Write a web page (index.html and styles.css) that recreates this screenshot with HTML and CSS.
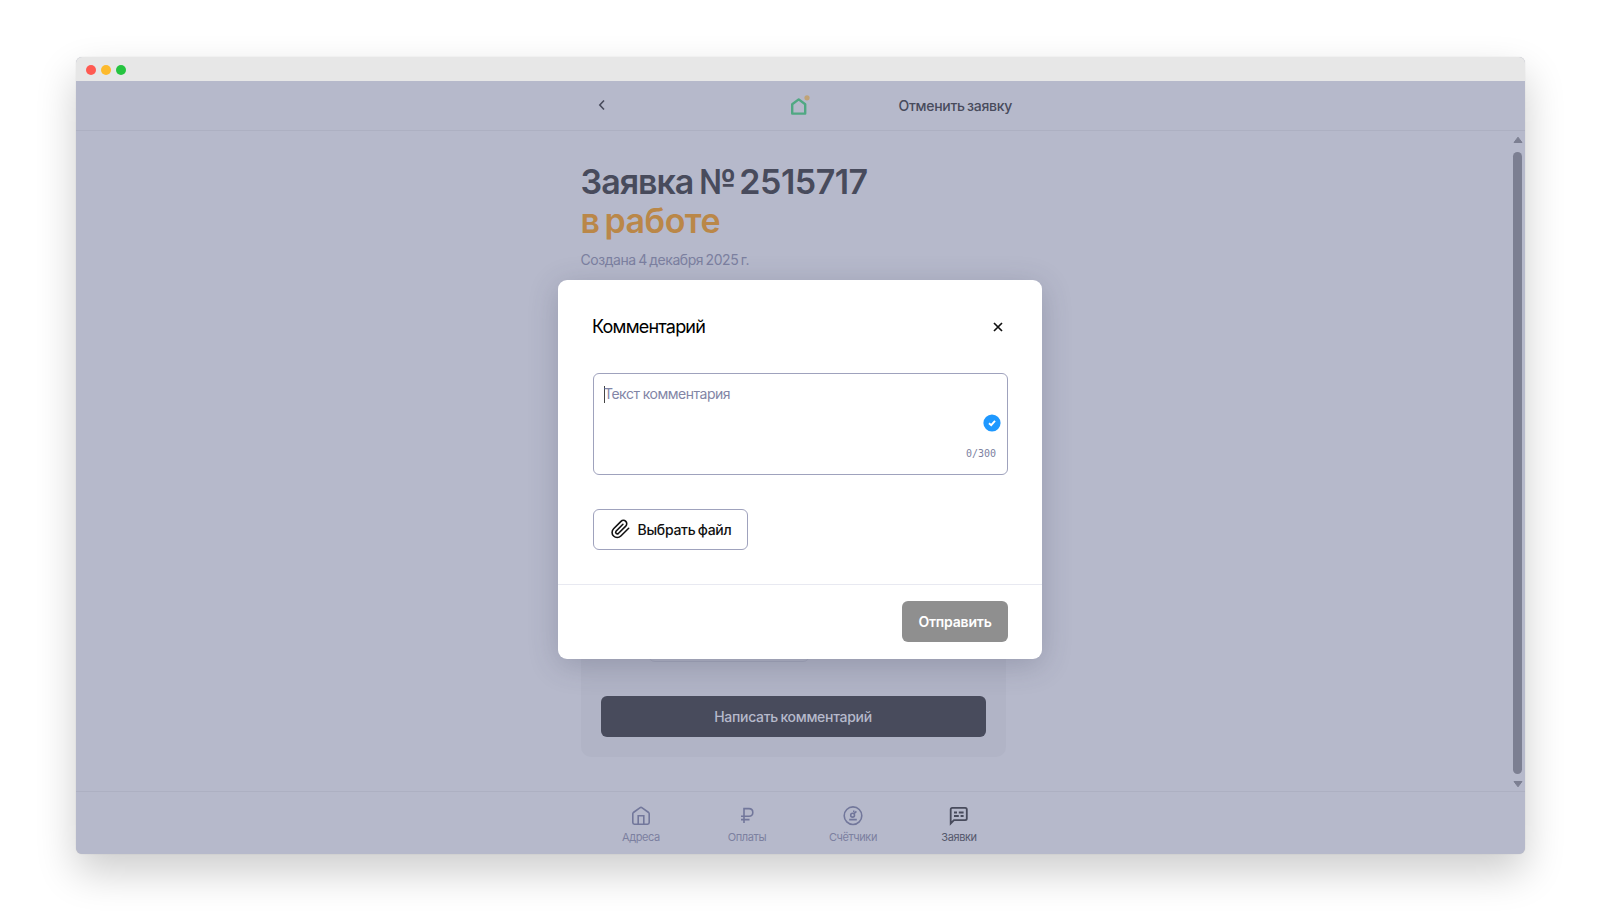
FILE: index.html
```
<!DOCTYPE html>
<html lang="ru">
<head>
    <meta charset="UTF-8">
    <meta name="viewport" content="width=device-width, initial-scale=1.0">
    <title>Заявка №2515717</title>
    <link rel="stylesheet" href="styles.css">
</head>
<body>

    <div class="window">
        <div class="titlebar">
            <span class="dot red"></span>
            <span class="dot yellow"></span>
            <span class="dot green"></span>
        </div>

        <header class="header">
            <div class="header-inner">
                <svg class="back" width="8" height="12" viewBox="0 0 8 12"><path d="M6 1.5 1.8 6 6 10.5"/></svg>
                <svg class="logo" width="20" height="22" viewBox="0 0 20 22">
                    <path d="M2.2 9.3 8.7 4.4 15.2 9.3V18.6H2.2Z"/>
                    <circle cx="17" cy="2.8" r="2.6"/>
                </svg>
                <a class="cancel">Отменить заявку</a>
            </div>
        </header>

        <main class="main">
            <div class="content">
                <h1><span class="name">Заявка</span> <span class="sign">№</span><span class="number">2515717</span><br><span class="status">в работе</span></h1>
                <p class="created">Создана 4 декабря 2025 г.</p>
                <section class="card">
                    <div class="message"></div>
                    <button class="write">Написать комментарий</button>
                </section>
            </div>
            <div class="scrollbar">
                <svg width="10" height="8" viewBox="0 0 10 8"><path d="M5 1.2 9 6.5H1Z"/></svg>
                <div class="thumb"></div>
                <svg width="10" height="8" viewBox="0 0 10 8"><path d="M5 6.8 9 1.5H1Z"/></svg>
            </div>
        </main>

        <nav class="nav">
            <a class="nav-item">
                <svg width="20" height="20" viewBox="0 0 20 20"><path d="M1.8 7.8Q1.8 7 2.4 6.5L8.8 1.8Q10 1 11.2 1.8L17.6 6.5Q18.2 7 18.2 7.8V16.6Q18.2 18.2 16.6 18.2H3.4Q1.8 18.2 1.8 16.6ZM7.2 18V9.8H12.8V18"/></svg>
                <span>Адреса</span>
            </a>
            <a class="nav-item">
                <svg width="20" height="20" viewBox="0 0 20 20"><path d="M7 17V2.6H12Q15.8 2.6 15.8 6.4T12 10.2H4M4 13.6H12.5"/></svg>
                <span>Оплаты</span>
            </a>
            <a class="nav-item">
                <svg width="20" height="20" viewBox="0 0 20 20"><circle cx="10" cy="9.7" r="8.8"/><circle cx="9.6" cy="9.2" r="1.9"/><path d="M11 7.8 13.4 5.4M6.2 13.6H13.8M10 5.4H11.5"/></svg>
                <span>Счётчики</span>
            </a>
            <a class="nav-item active">
                <svg width="20" height="20" viewBox="0 0 20 20"><path d="M1.7 17.5V3.4Q1.7 1.8 3.3 1.8H16.2Q17.8 1.8 17.8 3.4V12.6Q17.8 14.2 16.2 14.2H5ZM5 6.5H8M9.8 6.5H14.6M5 10H9.8M11.6 10H14.6"/></svg>
                <span>Заявки</span>
            </a>
        </nav>

        <div class="modal">
            <div class="modal-body">
                <div class="modal-head">
                    <h2>Комментарий</h2>
                    <svg class="close" width="10" height="10" viewBox="0 0 10 10"><path d="M1 1 9 9M9 1 1 9"/></svg>
                </div>
                <div class="field">
                    <i class="caret"></i>
                    <span class="placeholder">Текст комментария</span>
                    <svg class="check" width="18" height="18" viewBox="0 0 18 18"><circle cx="9" cy="9" r="8.6"/><path d="M6 9.2 8.2 11.2 12 6.8"/></svg>
                    <span class="counter">0/300</span>
                </div>
                <button class="file">
                    <svg width="20" height="20" viewBox="0 0 24 24"><path d="M22.4 11.1 13 20.4A6.1 6.1 0 0 1 4.3 11.7L13.2 2.8A4 4 0 0 1 18.9 8.5L10 17.4A2 2 0 0 1 7.2 14.6L15.5 6.3"/></svg>
                    <span>Выбрать файл</span>
                </button>
            </div>
            <div class="modal-foot">
                <button class="send">Отправить</button>
            </div>
        </div>
    </div>

</body>
</html>
```
FILE: styles.css
```
* {
    box-sizing: border-box;
}
body {
    margin: 0;
    height: 911px;
    padding: 57px 75.5px 0;
    background: #fff;
    font-family: Inter, "Liberation Sans", sans-serif;
    overflow: hidden;
}
h1, h2, p {
    margin: 0;
}
button {
    font-family: inherit;
    border: none;
    padding: 0;
    display: flex;
    align-items: center;
    justify-content: center;
}
svg {
    display: block;
    fill: none;
    flex: none;
}
span {
    white-space: nowrap;
}
.window {
    position: relative;
    height: 797px;
    display: flex;
    flex-direction: column;
    background: #b6b9cb;
    border-radius: 6px;
    box-shadow: 0 0 1px rgba(0, 0, 0, 0.2), 0 18px 40px rgba(0, 0, 0, 0.2);
}
.titlebar {
    height: 24px;
    padding: 1px 0 0 10px;
    display: flex;
    align-items: center;
    gap: 5px;
    background: #e7e7e7;
    border-radius: 6px 6px 0 0;
}
.dot {
    width: 10px;
    height: 10px;
    border-radius: 50%;
}
.red {
    background: #ff5a52;
}
.yellow {
    background: #fdba2d;
}
.green {
    background: #25c440;
}
.header {
    height: 50px;
    border-bottom: 1px solid #adb0c2;
    display: flex;
    justify-content: center;
}
.header-inner {
    width: 424px;
    display: grid;
    grid-template-columns: 1fr 20px 1fr;
    align-items: center;
}
.back {
    margin: -1px 0 0 10px;
    stroke: #484b5c;
    stroke-width: 1.6;
}
.logo path {
    stroke: #50a883;
    stroke-width: 2.4;
    stroke-linejoin: round;
}
.logo circle {
    fill: #c0a377;
}
.cancel {
    justify-self: end;
    margin-top: -1px;
    font-size: 14px;
    font-weight: 500;
    letter-spacing: -0.3px;
    word-spacing: -1px;
    color: #484b5c;
}
.main {
    height: 660px;
    display: flex;
}
.content {
    flex: 1;
    display: flex;
    flex-direction: column;
    align-items: center;
    padding-top: 31px;
}
h1, .created, .card {
    width: 425px;
}
h1 {
    font-size: 34px;
    line-height: 39px;
    font-weight: 600;
    word-spacing: -3px;
    color: #484b5c;
}
.name {
    letter-spacing: -1px;
}
.sign {
    letter-spacing: 3px;
}
.number {
    letter-spacing: -0.5px;
}
.status {
    letter-spacing: -0.5px;
    color: #ba8748;
}
.created {
    margin-top: 10px;
    font-size: 14px;
    line-height: 20px;
    letter-spacing: -0.45px;
    word-spacing: -1px;
    color: #7c80a0;
}
.card {
    height: 417px;
    margin-top: 70px;
    padding: 20px;
    background: #b1b4c6;
    border-radius: 10px;
    display: flex;
    flex-direction: column;
    justify-content: flex-end;
}
.message {
    width: 162px;
    height: 60px;
    margin: 0 0 34px 47px;
    border: 1px solid #a4a7bb;
    border-radius: 7px;
}
.write {
    height: 41px;
    background: #484b5c;
    color: #b6b9cb;
    border-radius: 6px;
    font-size: 14px;
    font-weight: 500;
    letter-spacing: -0.3px;
    word-spacing: -1px;
}
.scrollbar {
    width: 14px;
    padding: 5px 0 3px;
    display: flex;
    flex-direction: column;
    align-items: center;
    gap: 7px;
}
.scrollbar path {
    fill: #7c7f92;
    stroke: #7c7f92;
    stroke-linejoin: round;
}
.thumb {
    flex: 1;
    width: 9px;
    margin: 1px 0 -1px;
    border-radius: 5px;
    background: #7c7f92;
}
.nav {
    height: 63px;
    padding-top: 14px;
    border-top: 1px solid #adb0c2;
    display: flex;
    justify-content: center;
}
.nav-item {
    width: 106px;
    display: flex;
    flex-direction: column;
    align-items: center;
    gap: 4px;
    font-size: 11px;
    line-height: 14px;
    letter-spacing: -0.4px;
    color: #7c80a0;
}
.nav-item svg {
    stroke: #72779b;
    stroke-width: 1.6;
}
.nav-item.active {
    color: #55586c;
}
.nav-item.active svg {
    stroke: #484b5c;
    stroke-width: 1.8;
}

/* modal */
.modal {
    position: absolute;
    left: 482.5px;
    top: 223px;
    width: 484px;
    height: 379px;
    background: #fff;
    border-radius: 9px;
    box-shadow: 0 6px 30px rgba(50, 54, 80, 0.24);
    display: flex;
    flex-direction: column;
}
.modal-body {
    flex: 1;
    padding: 34px 34px 0 35px;
}
.modal-head {
    display: flex;
    align-items: center;
    justify-content: space-between;
    height: 25px;
    padding-right: 5px;
}
h2 {
    margin-left: -1px;
    font-size: 18px;
    line-height: 25px;
    font-weight: 400;
    letter-spacing: -0.8px;
    color: #000;
}
.close {
    stroke: #111;
    stroke-width: 1.7;
}
.field {
    height: 102px;
    margin-top: 34px;
    padding: 9px 11px 0 10px;
    border: 1px solid #9fa2bd;
    border-radius: 6px;
    display: grid;
    grid-template-columns: 1px 1fr;
    grid-template-rows: 31px 29px 22px;
}
.caret {
    width: 1px;
    height: 17px;
    margin-top: 3px;
    background: #444;
}
.placeholder {
    margin-left: -1px;
    font-size: 14px;
    line-height: 22px;
    letter-spacing: -0.5px;
    color: #8285a6;
}
.check {
    grid-column: 2;
    justify-self: end;
    margin-right: -5px;
}
.check circle {
    fill: #1e98ff;
}
.check path {
    stroke: #fff;
    stroke-width: 1.9;
}
.counter {
    grid-column: 2;
    justify-self: end;
    font-family: "DejaVu Sans Mono", monospace;
    font-size: 10px;
    line-height: 22px;
    color: #7c7fa0;
}
.file {
    width: 155px;
    height: 41px;
    margin-top: 34px;
    padding-bottom: 1px;
    gap: 8px;
    border: 1px solid #9fa2bd;
    border-radius: 6px;
    background: #fff;
    color: #111;
    font-size: 14px;
    font-weight: 500;
    letter-spacing: -0.3px;
    word-spacing: -1px;
}
.file svg {
    stroke: #111;
    stroke-width: 1.9;
    stroke-linecap: round;
}
.modal-foot {
    height: 75px;
    padding: 16px 34px 0;
    border-top: 1px solid #e8e9f1;
    display: flex;
    justify-content: flex-end;
}
.send {
    width: 106px;
    height: 41px;
    background: #8f8f8f;
    color: #fff;
    border-radius: 6px;
    font-size: 14px;
    font-weight: 600;
    letter-spacing: -0.2px;
}
```
